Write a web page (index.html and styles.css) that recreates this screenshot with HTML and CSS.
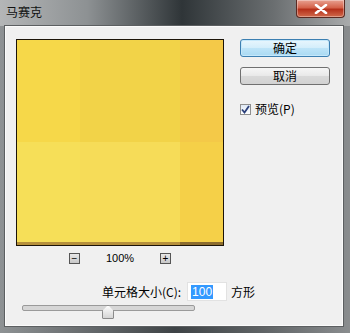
FILE: index.html
```html
<!DOCTYPE html>
<html lang="zh-CN">
<head>
  <meta charset="UTF-8" />
  <title>马赛克</title>
  <link rel="stylesheet" href="styles.css">
</head>
<body>
  <div class="window">
    <div class="titlebar">
      <span class="title">马赛克</span>
      <div class="close">
        <svg width="14" height="10" viewBox="0 0 14 10">
          <path d="M2 1 L12 9 M12 1 L2 9" stroke="#fff" stroke-width="2.6" stroke-linecap="round" fill="none"/>
        </svg>
      </div>
    </div>

    <div class="client">
      <div class="main">
        <div class="left">
          <div class="preview">
            <div class="cell c1"></div>
            <div class="cell c2"></div>
            <div class="cell c3"></div>
            <div class="cell c4"></div>
            <div class="cell c5"></div>
            <div class="cell c6"></div>
          </div>
          <div class="zoombar">
            <span class="zbtn">&minus;</span>
            <span class="zval">100%</span>
            <span class="zbtn">+</span>
          </div>
        </div>

        <div class="right">
          <button class="btn btn-default">确定</button>
          <button class="btn">取消</button>
          <label class="check">
            <span class="box">
              <svg width="9" height="9" viewBox="0 0 9 9">
                <path d="M1 4.5 L3.5 7.5 L8 1" stroke="#2b3f7a" stroke-width="1.8" fill="none"/>
              </svg>
            </span>
            预览(P)
          </label>
        </div>
      </div>

      <div class="sizerow">
        <span>单元格大小(C):</span>
        <span class="input"><span class="sel">100</span></span>
        <span>方形</span>
      </div>

      <div class="slider">
        <div class="track"></div>
        <div class="thumb"></div>
      </div>
    </div>
  </div>
</body>
</html>
```

FILE: styles.css
```css
body {
  margin: 0;
  font-family: "Noto Sans CJK SC", "Liberation Sans", sans-serif;
  font-size: 12px;
  color: #000;
}

.window {
  width: 350px;
  height: 333px;
  overflow: hidden;
  background: linear-gradient(90deg, #8e9294 0%, #6e7274 20%, #3e4346 50%, #5f6365 75%, #8a8d8f 100%);
}

.titlebar {
  height: 26px;
  display: flex;
  justify-content: space-between;
  align-items: flex-start;
  background: linear-gradient(90deg, #b4b6b7 0%, #8d9193 25%, #2f3538 52%, #6a6e70 78%, #a9abac 100%);
}

.title {
  margin: 4px 0 0 6px;
  line-height: 16px;
  color: #111;
}

.close {
  width: 47px;
  height: 17px;
  margin-right: 5px;
  display: flex;
  align-items: center;
  justify-content: center;
  border: 1px solid #5a2a22;
  border-top: none;
  border-radius: 0 0 4px 4px;
  background: linear-gradient(#e8a191 0%, #d4624a 45%, #b5301a 55%, #d06a4c 100%);
  box-shadow: inset 0 0 0 1px rgba(255, 255, 255, 0.35);
}

.client {
  box-sizing: border-box;
  width: 338px;
  height: 300px;
  margin-left: 5px;
  background: #f0f0f0;
  border: 1px solid #fbfbfb;
  box-shadow: 0 0 0 1px #5c5f61;
}

.main {
  display: flex;
  padding: 12px 0 0 10px;
}

.preview {
  box-sizing: border-box;
  width: 208px;
  height: 207px;
  border: 1px solid #1c1408;
  display: grid;
  grid-template-columns: 63px 100px 1fr;
  grid-template-rows: 102px 1fr;
  box-shadow: inset 0 -3px 0 #b8903a;
}

.c1 { background: #f6d849; }
.c2 { background: #f2d348; }
.c3 { background: #f4c948; }
.c4 { background: #f6df58; }
.c5 { background: #f6dc58; }
.c6 { background: #f5d048; }

.c4, .c5, .c6 {
  border-bottom: 3px solid #b6903c;
}

.c6 {
  border-bottom-color: #8c6c2e;
}

.zoombar {
  display: flex;
  align-items: center;
  height: 12px;
  margin-top: 6px;
  padding-left: 53px;
}

.zbtn {
  box-sizing: border-box;
  width: 11px;
  height: 11px;
  border: 1px solid #555;
  background: linear-gradient(#e8e8e8, #c8c8c8);
  font-family: "Liberation Sans", sans-serif;
  font-size: 10px;
  line-height: 9px;
  text-align: center;
}

.zval {
  width: 80px;
  text-align: center;
  font-family: "Liberation Sans", sans-serif;
  font-size: 11px;
}

.right {
  display: flex;
  flex-direction: column;
  margin-left: 16px;
}

.btn {
  box-sizing: border-box;
  width: 90px;
  height: 18px;
  margin-bottom: 10px;
  padding: 0;
  font: inherit;
  line-height: 14px;
  border: 1px solid #707070;
  border-radius: 3px;
  background: linear-gradient(#f6f6f6 0%, #e9e9e9 48%, #d9d9d9 52%, #d2d2d2 100%);
}

.btn-default {
  border-color: #3c7fb1;
  background: linear-gradient(#e8f6fd 0%, #d4eefb 48%, #bde4f8 52%, #a9d9f2 100%);
  box-shadow: inset 0 0 0 1px #c5e8fb;
}

.check {
  display: flex;
  align-items: center;
  gap: 4px;
  margin-top: 8px;
  line-height: 12px;
}

.box {
  box-sizing: border-box;
  width: 11px;
  height: 11px;
  border: 1px solid #8f8f8f;
  background: linear-gradient(#dfe9f5, #fff);
  display: flex;
  align-items: center;
  justify-content: center;
}

.sizerow {
  display: flex;
  align-items: center;
  gap: 4px;
  margin-top: 18px;
  padding-left: 96px;
  height: 19px;
}

.input {
  box-sizing: border-box;
  width: 40px;
  height: 19px;
  border: 1px solid #e2e2e2;
  background: #fff;
  padding: 2px 0 0 3px;
  margin-left: 2px;
  font-family: "Liberation Sans", sans-serif;
}

.sel {
  background: #3399ff;
  color: #fff;
  padding: 0 1px;
}

.slider {
  position: relative;
  height: 14px;
  margin: 3px 0 0 16px;
}

.track {
  width: 171px;
  height: 4px;
  margin-top: 4px;
  border: 1px solid #9a9a9a;
  border-radius: 2px;
  background: #d6d6d6;
}

.thumb {
  position: absolute;
  left: 80px;
  top: 0;
  width: 10px;
  height: 12px;
  background: linear-gradient(#fdfdfd, #d4d4d4);
  border: 1px solid #8a8a8a;
  clip-path: polygon(50% 0, 100% 45%, 100% 100%, 0 100%, 0 45%);
  border-radius: 1px;
}
```
